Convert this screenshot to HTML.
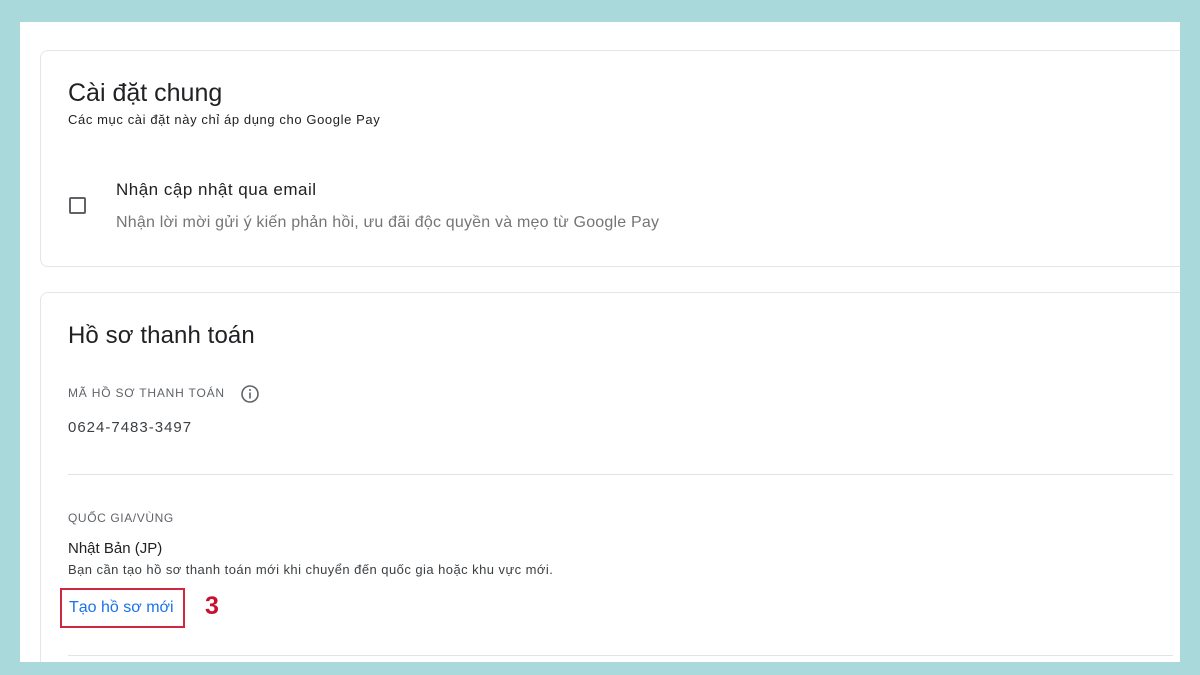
<!DOCTYPE html>
<html><head><meta charset="utf-8"><style>
*{margin:0;padding:0;box-sizing:border-box}
body{width:1200px;height:675px;background:#a9d9da;position:relative;overflow:hidden;font-family:"Liberation Sans",Arial,sans-serif;color:#202124}
.page{position:absolute;left:20px;top:22px;width:1160px;height:640px;background:#fff;overflow:hidden}
.card{position:absolute;left:20px;width:1160px;border:1px solid #e6e6e6;border-radius:8px;background:#fff}
.t{position:absolute;white-space:nowrap}
.hr{position:absolute;left:48px;width:1105px;height:1px;background:#e3e3e3}
</style></head><body>
<div class="page">
 <div class="card" style="top:28px;height:217px">
  <div class="t" style="left:27px;top:28px;font-size:25px;color:#202124">Cài đặt chung</div>
  <div class="t" style="left:27px;top:61px;font-size:13px;letter-spacing:.6px;color:#202124">Các mục cài đặt này chỉ áp dụng cho Google Pay</div>
  <div style="position:absolute;left:28px;top:146px;width:17px;height:17px;border:2px solid #5f6368;border-radius:2px"></div>
  <div class="t" style="left:75px;top:129px;font-size:17px;letter-spacing:.5px;color:#202124">Nhận cập nhật qua email</div>
  <div class="t" style="left:75px;top:163px;font-size:16px;letter-spacing:.2px;color:#757575">Nhận lời mời gửi ý kiến phản hồi, ưu đãi độc quyền và mẹo từ Google Pay</div>
 </div>
 <div class="card" style="top:270px;height:380px">
  <div class="t" style="left:27px;top:29px;font-size:24px;letter-spacing:.1px">Hồ sơ thanh toán</div>
  <div class="t" style="left:27px;top:93px;font-size:12px;color:#5f6368;letter-spacing:.8px">MÃ HỒ SƠ THANH TOÁN</div>
  <svg style="position:absolute;left:199px;top:91px" width="20" height="20" viewBox="0 0 20 20"><circle cx="10" cy="10" r="8" fill="none" stroke="#5f6368" stroke-width="1.6"/><rect x="9.2" y="8.5" width="1.6" height="6" fill="#5f6368"/><circle cx="10" cy="6" r="1" fill="#5f6368"/></svg>
  <div class="t" style="left:27px;top:126px;font-size:15px;color:#3c4043;letter-spacing:1px">0624-7483-3497</div>
 </div>
 <div class="hr" style="top:452px"></div>
 <div class="t" style="left:48px;top:489px;font-size:12px;color:#5f6368;letter-spacing:.6px">QUỐC GIA/VÙNG</div>
 <div class="t" style="left:48px;top:518px;font-size:15px;color:#202124">Nhật Bản (JP)</div>
 <div class="t" style="left:48px;top:540px;font-size:13px;letter-spacing:.45px;color:#3c4043">Bạn cần tạo hồ sơ thanh toán mới khi chuyển đến quốc gia hoặc khu vực mới.</div>
 <div style="position:absolute;left:40px;top:566px;width:125px;height:40px;border:2px solid #d0273f"></div>
 <div class="t" style="left:49px;top:577px;font-size:16px;color:#1a73e8">Tạo hồ sơ mới</div>
 <div class="t" style="left:185px;top:570px;font-size:25px;font-weight:bold;color:#c8102e">3</div>
 <div class="hr" style="top:633px"></div>
</div>
</body></html>
